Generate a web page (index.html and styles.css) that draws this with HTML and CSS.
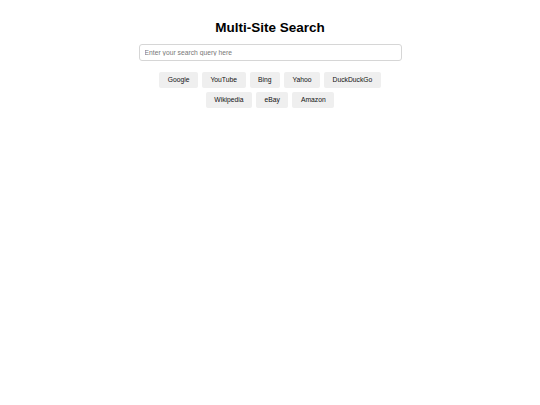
FILE: index.html
```html
<!DOCTYPE html>
<html lang="en">
<head>
<meta charset="utf-8">
<title>Multi-Site Search</title>
<link rel="stylesheet" href="styles.css">
</head>
<body>
<div class="container">
  <h1 class="title">Multi-Site Search</h1>
  <input class="search" type="text" placeholder="Enter your search query here">
  <div class="buttons">
    <button class="site-btn">Google</button>
    <button class="site-btn">YouTube</button>
    <button class="site-btn">Bing</button>
    <button class="site-btn">Yahoo</button>
    <button class="site-btn">DuckDuckGo</button>
    <button class="site-btn">Wikipedia</button>
    <button class="site-btn">eBay</button>
    <button class="site-btn">Amazon</button>
  </div>
</div>
</body>
</html>
```
FILE: styles.css
```css
html, body {
  margin: 0;
  padding: 0;
  background: #ffffff;
}
body {
  font-family: "Liberation Sans", Arial, sans-serif;
  color: #000;
}
.container {
  width: 263px;
  margin: 0 auto;
  padding-top: 20px;
  display: flex;
  flex-direction: column;
  align-items: stretch;
}
.title {
  font-size: 13.5px;
  font-weight: bold;
  text-align: center;
  margin: 0 0 8.5px;
  line-height: normal;
}
.search {
  box-sizing: border-box;
  width: 100%;
  height: 17px;
  margin: 0 0 11px;
  padding: 0 5px;
  border: 1px solid #d6d6d6;
  border-radius: 3px;
  font-family: "Liberation Sans", Arial, sans-serif;
  font-size: 6.75px;
  color: #222;
  outline: none;
}
.search::placeholder {
  color: #777;
}
.buttons {
  display: flex;
  flex-wrap: wrap;
  justify-content: center;
  gap: 4px;
}
.site-btn {
  font-family: "Liberation Sans", Arial, sans-serif;
  font-size: 6.75px;
  line-height: 8px;
  padding: 4px 8.5px;
  background: #efefef;
  color: #111;
  border: none;
  border-radius: 2px;
  cursor: pointer;
}
```
